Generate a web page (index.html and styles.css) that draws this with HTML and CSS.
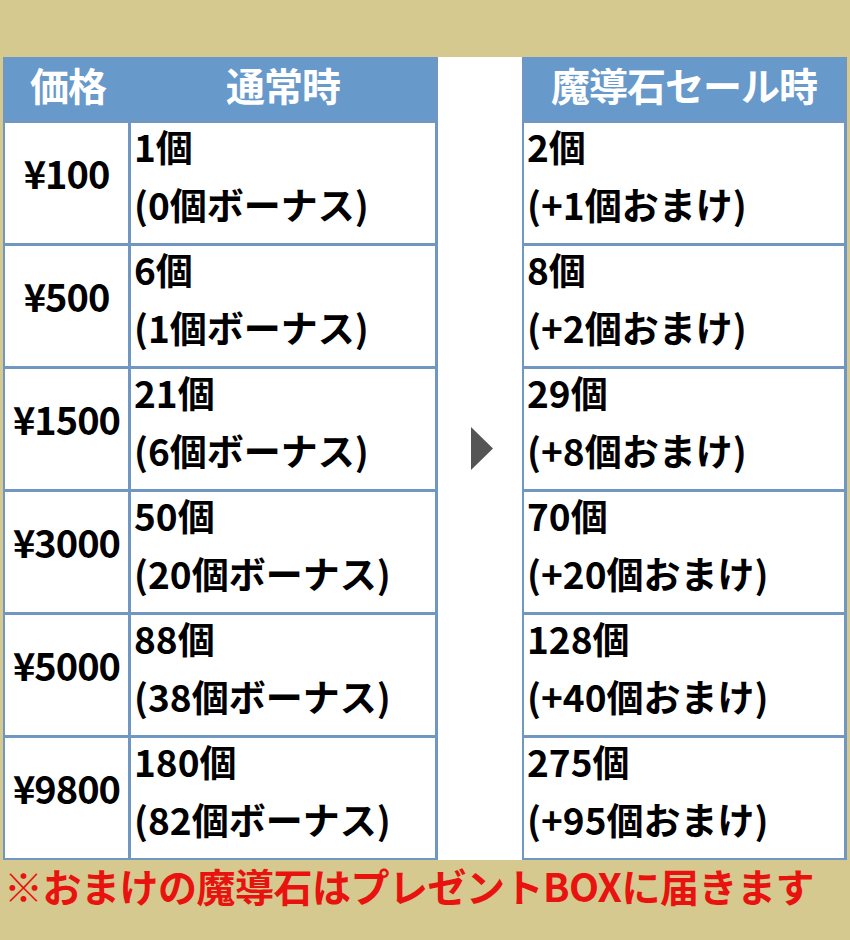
FILE: index.html
```html
<!DOCTYPE html>
<html lang="ja">
<head>
<meta charset="utf-8">
<title>魔導石セール</title>
<link rel="stylesheet" href="styles.css">
</head>
<body>
<div class="page">
  <div class="board">
    <div class="tbl tbl-normal">
      <div class="th">価格</div>
      <div class="th">通常時</div>

      <div class="price">¥100</div>
      <div class="cell"><span class="ln">1個</span><span class="ln">(0個ボーナス)</span></div>

      <div class="price">¥500</div>
      <div class="cell"><span class="ln">6個</span><span class="ln">(1個ボーナス)</span></div>

      <div class="price">¥1500</div>
      <div class="cell"><span class="ln">21個</span><span class="ln">(6個ボーナス)</span></div>

      <div class="price">¥3000</div>
      <div class="cell"><span class="ln">50個</span><span class="ln">(20個ボーナス)</span></div>

      <div class="price">¥5000</div>
      <div class="cell"><span class="ln">88個</span><span class="ln">(38個ボーナス)</span></div>

      <div class="price">¥9800</div>
      <div class="cell"><span class="ln">180個</span><span class="ln">(82個ボーナス)</span></div>
    </div>

    <div class="mid">
      <svg class="arrow" width="22" height="43" viewBox="0 0 22 43" aria-hidden="true">
        <polygon points="0,0 22,21.5 0,43" fill="#555555"/>
      </svg>
    </div>

    <div class="tbl tbl-sale">
      <div class="th">魔導石セール時</div>
      <div class="cell"><span class="ln">2個</span><span class="ln">(+1個おまけ)</span></div>
      <div class="cell"><span class="ln">8個</span><span class="ln">(+2個おまけ)</span></div>
      <div class="cell"><span class="ln">29個</span><span class="ln">(+8個おまけ)</span></div>
      <div class="cell"><span class="ln">70個</span><span class="ln">(+20個おまけ)</span></div>
      <div class="cell"><span class="ln">128個</span><span class="ln">(+40個おまけ)</span></div>
      <div class="cell"><span class="ln">275個</span><span class="ln">(+95個おまけ)</span></div>
    </div>
  </div>
  <p class="note">※おまけの魔導石はプレゼントBOXに届きます</p>
</div>
</body>
</html>
```

FILE: styles.css
```css
html, body {
  margin: 0;
  padding: 0;
  background: #d5c98f;
}

body {
  font-family: "Noto Sans CJK JP", "Noto Sans", sans-serif;
  font-weight: 700;
  color: #000;
}

.page {
  width: 850px;
  height: 940px;
  padding-top: 57px;
  box-sizing: border-box;
}

.board {
  margin-left: 3px;
  width: 844px;
  display: flex;
  background: #ffffff;
}

.tbl {
  display: grid;
  background: #7097c1;
  padding: 0 3px 2px 2px;
  gap: 3px;
  grid-template-rows: 63px repeat(6, 120px);
}

.tbl-normal {
  width: 435px;
  box-sizing: border-box;
  grid-template-columns: 123px 304px;
}

.tbl-sale {
  width: 325px;
  box-sizing: border-box;
  grid-template-columns: 320px;
}

.th {
  background: #6799cb;
  color: #ffffff;
  font-size: 39px;
  display: flex;
  align-items: center;
  justify-content: center;
  padding-bottom: 10px;
  letter-spacing: -1px;
}

.tbl-normal .th:first-child {
  margin-right: -3px;
}

.price {
  background: #ffffff;
  font-size: 38px;
  display: flex;
  align-items: center;
  justify-content: center;
  padding-bottom: 22px;
  letter-spacing: -1px;
  white-space: nowrap;
}

.cell {
  background: #ffffff;
  font-size: 37px;
  padding-left: 3px;
  display: flex;
  flex-direction: column;
  gap: 12px;
}

.ln {
  display: block;
  line-height: 46px;
  white-space: nowrap;
}

.mid {
  width: 84px;
  display: flex;
  justify-content: center;
  align-items: flex-start;
  padding-top: 370px;
  padding-left: 4px;
  box-sizing: border-box;
}

.arrow {
  display: block;
}

.note {
  margin: 0;
  padding-left: 4px;
  color: #e8120e;
  font-size: 39px;
  line-height: 50px;
  letter-spacing: -0.5px;
  white-space: nowrap;
}
```
